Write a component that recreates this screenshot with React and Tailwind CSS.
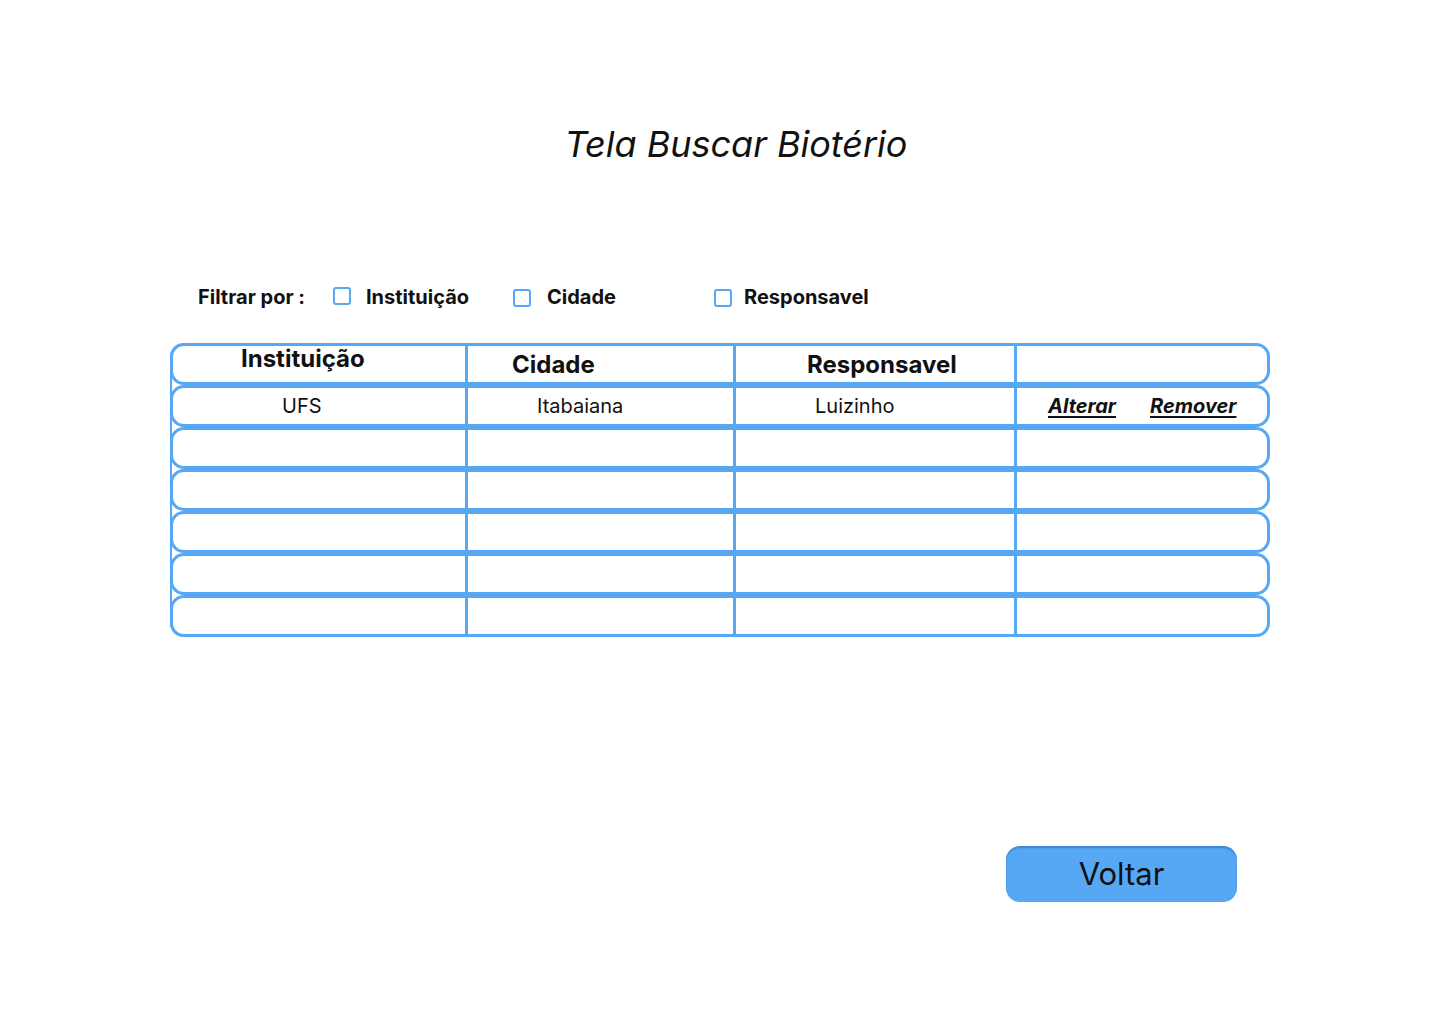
import React from 'react'

const rows = [
  { inst: 'UFS', cidade: 'Itabaiana', resp: 'Luizinho', actions: true },
  {}, {}, {}, {}, {},
]

function Checkbox() {
  return <span className="inline-block w-[18px] h-[18px] rounded-[3px] border-[2.5px] border-[#56a8f5] bg-white" />
}

function Row({ children }) {
  return (
    <div className="flex h-[42px] -ml-[2px] rounded-[14px] border-[3px] border-[#56a8f5] bg-white">
      {children}
    </div>
  )
}

export default function App() {
  return (
    <div className="w-[1440px] h-[1024px] bg-white text-[#111] overflow-hidden" style={{ fontFamily: 'Inter, "Noto Sans", sans-serif' }}>
      <h1 className="pt-[122px] text-center text-[36px] leading-[44px] italic font-normal pl-[32px]">Tela Buscar Biotério</h1>

      <div className="mt-[119px] flex items-center pl-[198px] h-[24px] text-[20px] font-bold">
        <span>Filtrar por :</span>
        <span className="ml-[28px] flex items-center -mt-[2px]"><Checkbox /></span>
        <span className="ml-[15px]">Instituição</span>
        <span className="ml-[44px] flex items-center mt-[2px]"><Checkbox /></span>
        <span className="ml-[16px]">Cidade</span>
        <span className="ml-[98px] flex items-center mt-[2px]"><Checkbox /></span>
        <span className="ml-[12px]">Responsavel</span>
      </div>

      <div className="mt-[34px] ml-[170px] w-[1100px] rounded-l-[14px] border-l-[2px] border-[#56a8f5]">
        <Row>
          <div className="w-[292px] pl-[68px] pb-[10px] flex items-center text-[24px] font-bold">Instituição</div>
          <div className="w-[268px] pl-[44px] pt-[2px] border-l-[3px] border-[#56a8f5] flex items-center text-[24px] font-bold">Cidade</div>
          <div className="w-[281px] pl-[71px] pt-[2px] border-l-[3px] border-[#56a8f5] flex items-center text-[24px] font-bold">Responsavel</div>
          <div className="flex-1 border-l-[3px] border-[#56a8f5]" />
        </Row>
        {rows.map((r, i) => (
          <Row key={i}>
            <div className="w-[292px] pl-[109px] flex items-center text-[20px]">{r.inst}</div>
            <div className="w-[268px] pl-[69px] border-l-[3px] border-[#56a8f5] flex items-center text-[20px]">{r.cidade}</div>
            <div className="w-[281px] pl-[79px] border-l-[3px] border-[#56a8f5] flex items-center text-[20px]">{r.resp}</div>
            <div className="flex-1 border-l-[3px] border-[#56a8f5] flex items-center pl-[31px] text-[20px] font-bold italic">
              {r.actions && (
                <>
                  <span className="underline underline-offset-[3px]">Alterar</span>
                  <span className="ml-[34px] underline underline-offset-[3px]">Remover</span>
                </>
              )}
            </div>
          </Row>
        ))}
      </div>

      <div className="mt-[209px] ml-[1006px] w-[231px] h-[56px] rounded-[14px] bg-[#56a8f5] shadow-[inset_0_2px_2px_rgba(30,90,160,0.45)] flex items-center justify-center text-[31px]">
        Voltar
      </div>
    </div>
  )
}
